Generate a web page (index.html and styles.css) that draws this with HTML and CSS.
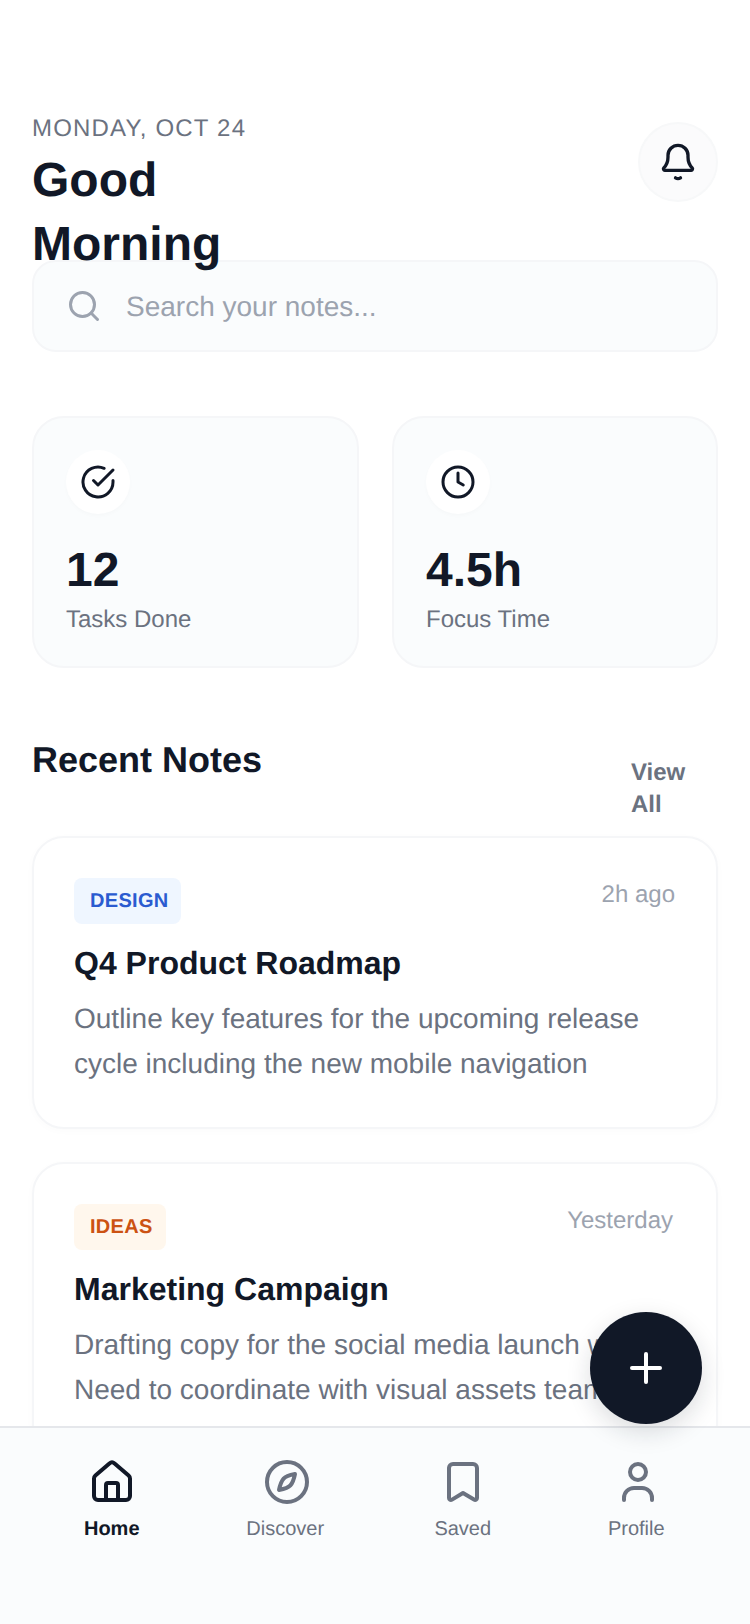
FILE: index.html
```html
<!DOCTYPE html>
<html lang="en">

<head>
  <meta charset="UTF-8">
  <meta name="viewport" content="width=device-width, initial-scale=1.0">
  <title>Notes</title>
  <link rel="stylesheet" href="styles.css">
</head>

<body>
  <div class="app">
    <main class="content">
      <div class="header">
        <div class="greeting">
          <div class="date">MONDAY, OCT 24</div>
          <h1>Good Morning</h1>
        </div>
        <button class="bell">
          <svg width="40" height="40" viewBox="0 0 24 24" fill="none" stroke="#111827" stroke-width="2" stroke-linecap="round" stroke-linejoin="round">
            <path d="M6 9V8a6 6 0 0 1 12 0v1c0 3 1 5 2.5 6.5a.9.9 0 0 1-.6 1.5H4.100a.9.9 0 0 1-.6-1.500C5 14 6 12 6 9z" />
            <path d="M10.500 21.500q1.500 1 3 0" />
          </svg>
        </button>
      </div>

      <div class="search">
        <svg width="36" height="36" viewBox="0 0 24 24" fill="none" stroke="#9ca3af" stroke-width="2" stroke-linecap="round" stroke-linejoin="round">
          <circle cx="11" cy="11" r="8" />
          <path d="m21 21-4.300-4.300" />
        </svg>
        <span>Search your notes...</span>
      </div>

      <div class="stats">
        <div class="stat">
          <div class="stat-icon">
            <svg width="36" height="36" viewBox="0 0 24 24" fill="none" stroke="#111827" stroke-width="2" stroke-linecap="round" stroke-linejoin="round">
              <path d="M22 11.080V12a10 10 0 1 1-5.930-9.140" />
              <path d="M22 4 12 14.010l-3-3" />
            </svg>
          </div>
          <div class="stat-value">12</div>
          <div class="stat-label">Tasks Done</div>
        </div>
        <div class="stat">
          <div class="stat-icon">
            <svg width="36" height="36" viewBox="0 0 24 24" fill="none" stroke="#111827" stroke-width="2" stroke-linecap="round" stroke-linejoin="round">
              <circle cx="12" cy="12" r="10" />
              <path d="M12 6v6l3.500 2" />
            </svg>
          </div>
          <div class="stat-value">4.5h</div>
          <div class="stat-label">Focus Time</div>
        </div>
      </div>

      <div class="section-head">
        <h2>Recent Notes</h2>
        <a class="view-all">View All</a>
      </div>

      <div class="note">
        <div class="note-top">
          <span class="tag tag-design">DESIGN</span>
          <span class="note-time">2h ago</span>
        </div>
        <h3>Q4 Product Roadmap</h3>
        <p>Outline key features for the upcoming release cycle including the new mobile navigation</p>
      </div>

      <div class="note">
        <div class="note-top">
          <span class="tag tag-ideas">IDEAS</span>
          <span class="note-time note-time-long">Yesterday</span>
        </div>
        <h3>Marketing Campaign</h3>
        <p>Drafting copy for the social media launch week. Need to coordinate with visual assets team</p>
      </div>
    </main>

    <button class="fab">
      <svg width="48" height="48" viewBox="0 0 24 24" fill="none" stroke="#fff" stroke-width="2" stroke-linecap="round" stroke-linejoin="round">
        <path d="M5 12h14" />
        <path d="M12 5v14" />
      </svg>
    </button>

    <nav class="nav">
      <div class="nav-item active">
        <svg width="48" height="48" viewBox="0 0 24 24" fill="none" stroke="currentColor" stroke-width="2" stroke-linecap="round" stroke-linejoin="round">
          <path d="M15 21v-7.500a1 1 0 0 0-1-1h-4a1 1 0 0 0-1 1V21" />
          <path d="M3 10.200a2 2 0 0 1 .7-1.500l7-6a2 2 0 0 1 2.600 0l7 6a2 2 0 0 1 .7 1.500V19a2 2 0 0 1-2 2H5a2 2 0 0 1-2-2z" />
        </svg>
        <span>Home</span>
      </div>
      <div class="nav-item nudge">
        <svg width="48" height="48" viewBox="0 0 24 24" fill="none" stroke="currentColor" stroke-width="2" stroke-linecap="round" stroke-linejoin="round">
          <circle cx="12" cy="12" r="10" />
          <path d="M16 8C12.500 8.700 11 9.500 10.300 10.300S8.700 12.500 8 16C11.500 15.300 13 14.500 13.700 13.700S15.300 11.500 16 8z" />
        </svg>
        <span>Discover</span>
      </div>
      <div class="nav-item">
        <svg width="48" height="48" viewBox="0 0 24 24" fill="none" stroke="currentColor" stroke-width="2" stroke-linecap="round" stroke-linejoin="round">
          <path d="M7 3h10a2 2 0 0 1 2 2v15c0 .8-.8 1.200-1.500.8L12 17.500l-5.500 3.300c-.7.4-1.500 0-1.500-.8V5a2 2 0 0 1 2-2z" />
        </svg>
        <span>Saved</span>
      </div>
      <div class="nav-item nudge">
        <svg width="48" height="48" viewBox="0 0 24 24" fill="none" stroke="currentColor" stroke-width="2" stroke-linecap="round" stroke-linejoin="round">
          <path d="M19 21v-1a5 5 0 0 0-5-5h-4a5 5 0 0 0-5 5v1" />
          <circle cx="12" cy="7" r="4" />
        </svg>
        <span>Profile</span>
      </div>
    </nav>
  </div>
</body>

</html>
```

FILE: styles.css
```css
:root {
  --ink: #111827;
  --muted: #6b7280;
  --faint: #9ca3af;
  --panel: #fafcfd;
  --line: #f5f6f8;
}

* {
  box-sizing: border-box;
}

body {
  margin: 0;
  background-color: #fff;
  color: var(--ink);
  font-family: 'Liberation Sans', Arial, sans-serif;
  text-rendering: geometricPrecision;
}

.app {
  position: relative;
  width: 750px;
  height: 1624px;
  display: flex;
  flex-direction: column;
  overflow: hidden;
}

.content {
  flex: 1;
  min-height: 0;
  overflow: hidden;
  padding: 113px 32px 0;
}

/* fixed height: the two-line title runs into the search box on purpose */
.header {
  display: flex;
  justify-content: space-between;
  align-items: flex-start;
  height: 147px;
}

.greeting {
  width: 300px;
}

.date {
  margin-bottom: 4px;
  font-size: 24px;
  line-height: 32px;
  letter-spacing: 1.2px;
  color: var(--muted);
}

h1 {
  margin: 0;
  font-size: 48px;
  line-height: 64px;
  font-weight: 700;
}

.bell {
  width: 80px;
  height: 80px;
  margin-top: 9px;
  padding: 0;
  border: 2px solid #f7f8f9;
  border-radius: 50%;
  background-color: #fbfbfc;
  display: flex;
  align-items: center;
  justify-content: center;
}

.search {
  height: 92px;
  display: flex;
  align-items: center;
  gap: 24px;
  padding: 0 32px;
  background-color: var(--panel);
  border: 2px solid var(--line);
  border-radius: 24px;
  font-size: 28px;
  color: var(--faint);
}

.search span {
  padding-top: 2px;
}

.stats {
  display: grid;
  grid-template-columns: 327px 1fr;
  gap: 33px;
  margin-top: 64px;
}

.stat {
  height: 252px;
  padding: 32px;
  background-color: var(--panel);
  border: 2px solid var(--line);
  border-radius: 32px;
}

.stat-icon {
  width: 64px;
  height: 64px;
  border-radius: 50%;
  background-color: #fff;
  display: flex;
  align-items: center;
  justify-content: center;
  box-shadow: 0 2px 4px rgba(0, 0, 0, 0.02);
}

.stat-value {
  margin-top: 27px;
  font-size: 48px;
  line-height: 60px;
  font-weight: 700;
}

.stat-label {
  margin-top: 3px;
  font-size: 24px;
  line-height: 32px;
  color: var(--muted);
}

.section-head {
  display: flex;
  justify-content: space-between;
  margin-top: 68px;
  margin-bottom: 15px;
}

h2 {
  margin: 0;
  font-size: 36px;
  line-height: 48px;
  font-weight: 700;
}

.view-all {
  width: 84px;
  margin-top: 21px;
  margin-right: 3px;
  font-size: 24px;
  line-height: 32px;
  font-weight: 700;
  color: var(--muted);
}

.note {
  margin-bottom: 33px;
  padding: 40px 40px 41px;
  background-color: #fff;
  border: 2px solid var(--line);
  border-radius: 32px;
  box-shadow: 0 2px 8px rgba(0, 0, 0, 0.02);
}

.note-top {
  display: flex;
  justify-content: space-between;
  align-items: flex-start;
}

.tag {
  padding: 8px 13px 8px 16px;
  border-radius: 8px;
  font-size: 20px;
  line-height: 30px;
  font-weight: 700;
  letter-spacing: 0.3px;
}

.tag-design {
  background-color: #eff6ff;
  color: #2a5bd0;
}

.tag-ideas {
  background-color: #fff7ed;
  color: #cc5212;
}

.note-time {
  margin-top: 1px;
  margin-right: 1px;
  font-size: 24px;
  line-height: 32px;
  color: var(--faint);
}

.note-time-long {
  margin-right: 3px;
}

h3 {
  margin: 17px 0 11px;
  font-size: 32px;
  line-height: 44px;
  font-weight: 700;
}

.note p {
  margin: 0;
  font-size: 28px;
  line-height: 45px;
  color: var(--muted);
}

.fab {
  position: absolute;
  left: 590px;
  top: 1312px;
  width: 112px;
  height: 112px;
  padding: 0;
  border: none;
  border-radius: 50%;
  background-color: var(--ink);
  display: flex;
  align-items: center;
  justify-content: center;
  box-shadow: 0 8px 24px rgba(17, 24, 39, 0.15);
}

.nav {
  height: 198px;
  display: grid;
  grid-template-columns: repeat(4, 1fr);
  padding: 30px 24px 0;
  background-color: var(--panel);
  border-top: 2px solid #e5e7eb;
}

.nav-item {
  display: flex;
  flex-direction: column;
  align-items: center;
  gap: 9px;
  font-size: 20px;
  line-height: 28px;
  color: var(--muted);
}

.nav-item.active {
  color: var(--ink);
  font-weight: 700;
}

.nav-item.nudge span {
  margin-right: 4px;
}
```
